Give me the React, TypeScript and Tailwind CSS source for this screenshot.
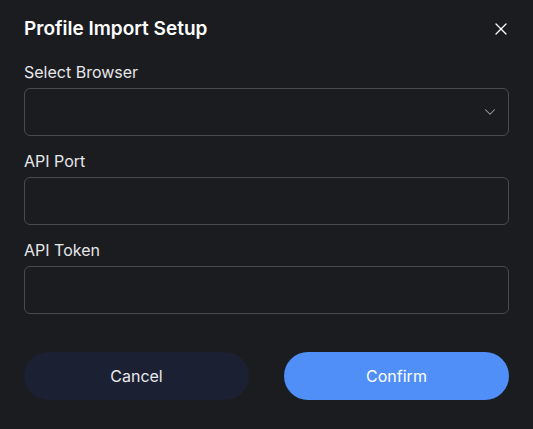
import { X, ChevronDown } from "lucide-react";

function Field({ label, select }: { label: string; select?: boolean }) {
  return (
    <div className="flex flex-col gap-1">
      <label className="text-[16px] leading-6 text-[#e6e7ea]">{label}</label>
      <div className="relative h-12 rounded-md border border-[#4a4b50] bg-[#1b1c20]">
        {select && (
          <ChevronDown
            className="absolute right-[9px] top-1/2 -translate-y-1/2 text-[#a0a1a6]"
            size={18}
            strokeWidth={1.4}
          />
        )}
      </div>
    </div>
  );
}

export default function App() {
  return (
    <div
      className="w-[533px] h-[429px] bg-[#1b1c20] px-6 pt-[17px] text-white"
      style={{ fontFamily: "Inter, 'Open Sans', sans-serif" }}
    >
      <div className="flex items-center justify-between h-6">
        <h2 className="text-[19px] font-semibold leading-6 text-white">Profile Import Setup</h2>
        <X size={20} strokeWidth={1.5} className="text-white mr-[-2px]" />
      </div>

      <div className="mt-[19px] flex flex-col gap-[13px]">
        <Field label="Select Browser" select />
        <Field label="API Port" />
        <Field label="API Token" />
      </div>

      <div className="mt-[38px] flex gap-[35px]">
        <button className="flex-1 h-12 rounded-full bg-[#1c2033] text-[16px] text-[#e8e9ec]">Cancel</button>
        <button className="flex-1 h-12 rounded-full bg-[#4f8ff7] text-[16px] text-white">Confirm</button>
      </div>
    </div>
  );
}
